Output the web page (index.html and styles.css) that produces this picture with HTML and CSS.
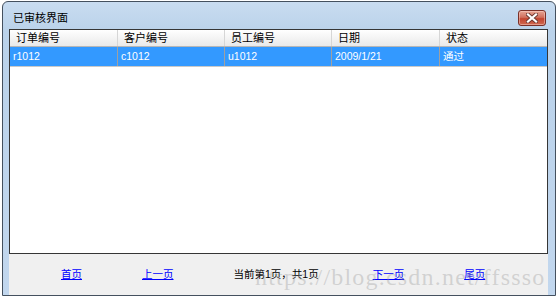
FILE: index.html
```html
<!DOCTYPE html>
<html lang="zh-CN">
  <head>
    <meta charset="UTF-8" />
    <title>已审核界面</title>
    <link rel="stylesheet" href="styles.css">
  </head>
  <body>
    <div class="window">
      <div class="titlebar">
        <span class="title">已审核界面</span>
        <button class="close-btn" type="button">
          <svg width="12" height="10" viewBox="0 0 12 10">
            <path d="M2 1.5L10 8.5M10 1.5L2 8.5" stroke="#6e3a33" stroke-width="4" stroke-linecap="square" />
            <path d="M2 1.5L10 8.5M10 1.5L2 8.5" stroke="#ffffff" stroke-width="2.2" stroke-linecap="square" />
          </svg>
        </button>
      </div>
      <div class="client">
        <div class="grid">
          <div class="row header-row">
            <div class="cell">订单编号</div>
            <div class="cell">客户编号</div>
            <div class="cell">员工编号</div>
            <div class="cell">日期</div>
            <div class="cell">状态</div>
          </div>
          <div class="row data-row selected">
            <div class="cell">r1012</div>
            <div class="cell">c1012</div>
            <div class="cell">u1012</div>
            <div class="cell">2009/1/21</div>
            <div class="cell">通过</div>
          </div>
        </div>
        <div class="pager">
          <a href="#" class="page-link">首页</a>
          <a href="#" class="page-link">上一页</a>
          <span class="page-info">当前第1页，共1页</span>
          <a href="#" class="page-link">下一页</a>
          <a href="#" class="page-link">尾页</a>
        </div>
      </div>
      <div class="watermark">https://blog.csdn.net/ffssso</div>
    </div>
  </body>
</html>
```

FILE: styles.css
```css
* {
  box-sizing: border-box;
  margin: 0;
  padding: 0;
}

body {
  font-family: "Liberation Sans", "Noto Sans CJK SC", sans-serif;
  font-size: 10.5px;
  background-color: #ffffff;
  color: #000;
}

.window {
  position: relative;
  margin: 1px 0 0 2px;
  width: 554px;
  height: 295px;
  border: 1px solid #44505e;
  border-radius: 6px 6px 0 0;
  background: linear-gradient(#c9dcf0, #bad2ea 30px, #c2d7ee);
  display: flex;
  flex-direction: column;
  overflow: hidden;
}

.titlebar {
  height: 27px;
  display: flex;
  justify-content: space-between;
  align-items: flex-start;
  padding: 0 9px 0 10px;
}

.title {
  margin-top: 9px;
  font-size: 11px;
  line-height: 14px;
}

.close-btn {
  margin-top: 8px;
  width: 28px;
  height: 16px;
  border: 1px solid #7a3028;
  border-radius: 3px;
  background: linear-gradient(#e7a595, #d1705e 45%, #c2442f 55%, #cf6a52);
  display: flex;
  justify-content: center;
  align-items: center;
  box-shadow: inset 0 0 0 1px rgba(255, 220, 210, 0.45);
}

.client {
  margin: 0 7px 0 6px;
  flex-grow: 1;
  display: flex;
  flex-direction: column;
}

.grid {
  height: 225px;
  border: 1px solid #363636;
  background-color: #ffffff;
}

.row {
  display: grid;
  grid-template-columns: 108px 107px 107px 108px 1fr;
}

.header-row {
  height: 17px;
  background: linear-gradient(#ffffff, #f4f4f4 50%, #e9e9e9);
  border-bottom: 1px solid #b6b6b6;
}

.header-row .cell {
  padding-left: 6px;
  font-size: 11px;
  line-height: 16px;
  border-right: 1px solid #d6d6d6;
}

.data-row {
  height: 20px;
  border-bottom: 1px solid #c9c9c9;
}

.data-row .cell {
  padding-left: 3px;
  line-height: 19px;
  border-right: 1px solid #a0a0a0;
}

.selected {
  background-color: #3399ff;
  color: #ffffff;
}

.cell:last-child {
  border-right: none;
}

.pager {
  flex-grow: 1;
  background-color: #f0f0f0;
  display: flex;
  align-items: flex-start;
  gap: 60px;
  padding: 13px 0 0 52px;
  line-height: 14px;
}

.page-link {
  color: #0000ff;
  text-decoration: underline;
}

.page-info {
  margin-right: -6px;
}

.watermark {
  position: absolute;
  left: 252px;
  top: 263px;
  font-family: "Liberation Serif", serif;
  font-size: 24px;
  line-height: 24px;
  letter-spacing: 1.2px;
  color: rgba(150, 150, 150, 0.35);
  white-space: nowrap;
  pointer-events: none;
}
```
